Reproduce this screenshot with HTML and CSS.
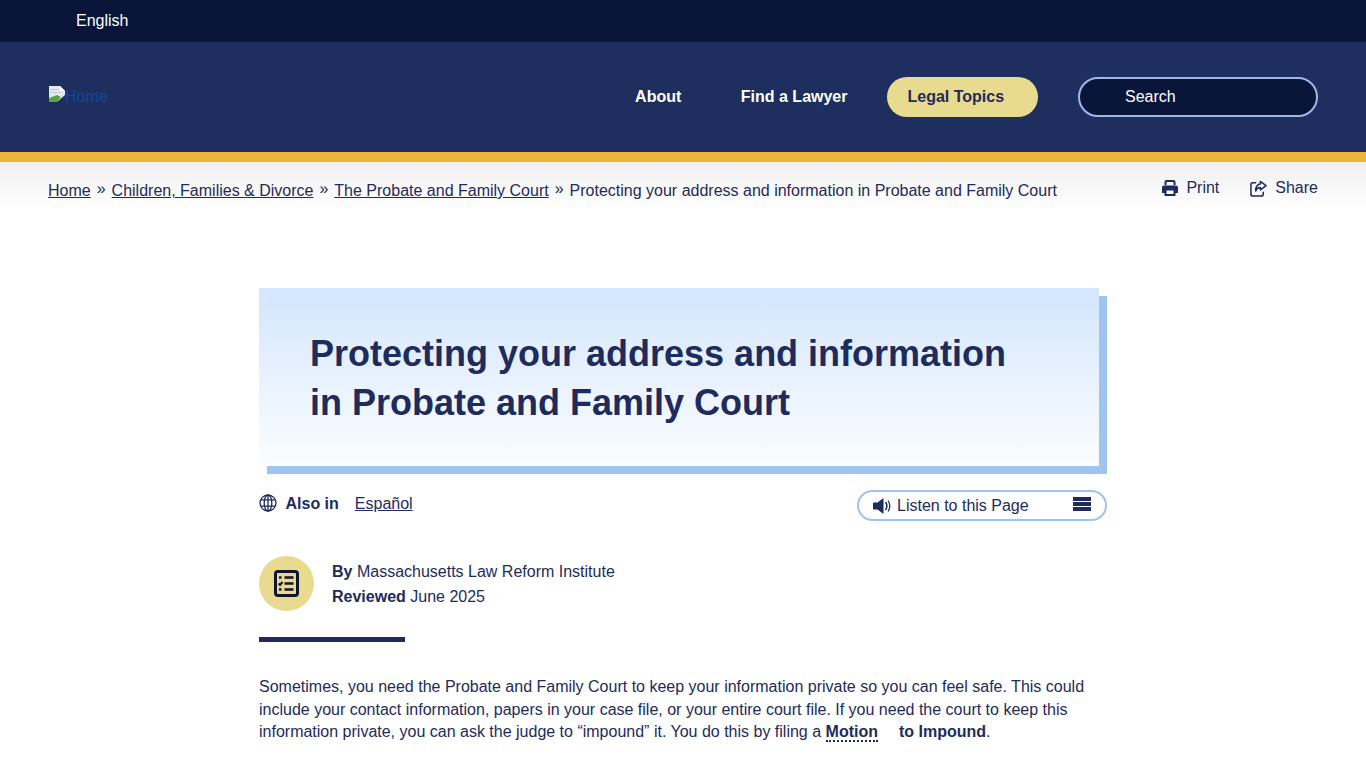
FILE: index.html
```html
<!DOCTYPE html>
<html lang="en">
<head>
<meta charset="utf-8">
<title>Protecting your address and information in Probate and Family Court</title>
<link rel="stylesheet" href="styles.css">
</head>
<body>
<div class="topbar"><span class="lang">English</span></div>
<header class="masthead">
  <a class="logo" href="#"><svg class="broken" width="16" height="16" viewBox="0 0 16 16"><path d="M0 0h11l5 5v11H0z" fill="#e6eaf0"/><path d="M11 0l5 5h-5z" fill="#fff"/><path d="M1 3h9v1H1zM1 6h12v1H1z" fill="#c4cede"/><path d="M0 16v-4l8-3 4 2-4 5z" fill="#58a63a"/><path d="M8 16l8-7v7z" fill="#1e2f5f"/></svg><span>Home</span></a>
  <nav class="nav">
    <a class="nav-link link-about" href="#">About</a>
    <a class="nav-link link-find" href="#">Find a Lawyer</a>
    <a class="nav-pill" href="#">Legal Topics</a>
    <div class="search">Search</div>
  </nav>
</header>
<div class="crumbbar">
  <div class="crumbs"><a href="#">Home</a><span class="sep">»</span><a href="#">Children, Families &amp; Divorce</a><span class="sep">»</span><a href="#">The Probate and Family Court</a><span class="sep">»</span><span>Protecting your address and information in Probate and Family Court</span></div>
  <div class="tools">
    <span class="tool tool-print"><svg width="16" height="16" viewBox="0 0 16 16"><path fill="#1e2b5c" fill-rule="evenodd" d="M4.500 0h7A2 2 0 0 1 13.500 2v3h-2V2h-7v3h-2V2a2 2 0 0 1 2-2zM2 5.500h12a2 2 0 0 1 2 2V13h-2.500v3h-11v-3H0V7.500a2 2 0 0 1 2-2zM4.500 10.500V14h7v-3.500z"/></svg>Print</span>
    <span class="tool"><svg width="17" height="17" viewBox="0 0 18 18"><path fill="none" stroke="#1e2b5c" stroke-width="1.600" d="M6.500 3H3a2 2 0 0 0-2 2v10a2 2 0 0 0 2 2h9a2 2 0 0 0 2-2v-2.500"/><path fill="none" stroke="#1e2b5c" stroke-width="1.600" stroke-linejoin="round" d="M11 1.500l6 4.500-6 4.500V8C8.500 8 7 9 6 11.500 5.800 7.500 8 4.200 11 4.200z"/></svg>Share</span>
  </div>
</div>
<main class="article">
  <div class="title-box"><h1>Protecting your address and information<br>in Probate and Family Court</h1></div>
  <div class="meta-row">
    <div class="also"><svg width="18" height="18" viewBox="0 0 18 18" fill="none" stroke="#1e2b5c" stroke-width="1.300"><circle cx="9" cy="9" r="8"/><ellipse cx="9" cy="9" rx="3.800" ry="8"/><path d="M9 1v16M1.800 5.800h14.400M1.800 12.200h14.400"/></svg><strong>Also in</strong><a href="#">Español</a></div>
    <div class="listen">
      <span class="listen-label"><svg width="18" height="16" viewBox="0 0 18 16"><path fill="#1e2b5c" d="M0 5.500Q0 4.500 1 4.500h3.500l6-4.500v16l-6-4.500H1Q0 11.500 0 10.500z"/><path fill="none" stroke="#1e2b5c" stroke-width="1.500" d="M12.500 4c1.700 2.500 1.700 5.500 0 8"/><path fill="none" stroke="#1e2b5c" stroke-width="1.200" d="M15 2.500c2.300 3.500 2.300 7.500 0 11"/></svg>Listen to this Page</span>
      <span class="burger"><i></i><i></i><i></i></span>
    </div>
  </div>
  <div class="byline">
    <div class="badge"><svg width="25" height="27" viewBox="0 0 25 27" fill="none" stroke="#0f1430"><rect x="1.500" y="1.500" width="22" height="24" rx="2.500" stroke-width="3"/><path stroke-width="2.600" d="M10.500 7.500h9M10.500 13.500h9M10.500 19.500h9"/><path stroke-width="2.600" d="M5 7.500h2.500M5 19.500h2.500"/><path stroke-width="2" d="M4.500 13.500l1.500 1.500 2.500-3"/></svg></div>
    <div class="by-text"><div><strong>By</strong> Massachusetts Law Reform Institute</div><div><strong>Reviewed</strong> June 2025</div></div>
  </div>
  <div class="rule"></div>
  <p class="intro">Sometimes, you need the Probate and Family Court to keep your information private so you can feel safe. This could include your contact information, papers in your case file, or your entire court file. If you need the court to keep this information private, you can ask the judge to “impound” it. You do this by filing a <strong class="term">Motion</strong><strong class="term-rest">to Impound</strong>.</p>
</main>
</body>
</html>
```
FILE: styles.css
```css
* { box-sizing: border-box; }
html, body { margin: 0; height: 768px; overflow: hidden; }
body { font-family: "Liberation Sans", Arial, sans-serif; color: #1e2b5c; background: #fff; font-size: 16px; }
a { color: inherit; }

.topbar { height: 42px; background: #0a153a; display: flex; align-items: center; padding-left: 76px; }
.lang { color: #fff; font-size: 16px; }

.masthead { height: 110px; background: #1e2f5f; display: flex; align-items: center; justify-content: space-between; padding: 0 48px 0 49px; }
.logo { display: flex; align-items: flex-start; color: #0a4a9c; text-decoration: none; font-size: 16px; line-height: 18px; }
.broken { display: block; margin-top: -2px; }
.nav { display: flex; align-items: center; }
.nav-link { color: #fff; font-weight: 700; text-decoration: none; font-size: 16px; }
.link-about { margin-right: 59.500px; }
.link-find { margin-right: 39.500px; }
.nav-pill { width: 151px; height: 40px; border-radius: 20px; background: #e8da8e; color: #1e2b5c; font-weight: 700; text-decoration: none; display: flex; align-items: center; padding-left: 20.500px; margin-right: 40px; }
.search { width: 240px; height: 40px; border-radius: 20px; background: #0a153a; border: 2px solid #9db9e8; color: #fff; display: flex; align-items: center; padding-left: 45px; }

.crumbbar { border-top: 10px solid #ebb536; height: 58px; background: linear-gradient(#efefef, #fff); display: flex; justify-content: space-between; padding: 19px 48px 0; }
.crumbs { display: flex; line-height: 19px; }
.sep { margin: -2px 6px 0; }
.tools { display: flex; margin-top: -3px; height: 20px; color: #1e2b5c; }
.tool { display: flex; align-items: center; gap: 8px; }
.tool-print { margin-right: 31px; }

.article { width: 848px; margin: 78px 0 0 259px; }
.title-box { width: 840px; height: 178px; background: linear-gradient(#d3e6fd, #fbfdff); box-shadow: 8px 8px 0 #a0c4f0; padding: 41px 51px 0; }
h1 { margin: 0; font-size: 36px; line-height: 49px; font-weight: 700; color: #1e2b5c; }

.meta-row { display: flex; justify-content: space-between; margin-top: 24px; height: 31px; }
.also { display: flex; align-items: flex-start; line-height: 19px; margin-top: 4px; }
.also svg { margin: 0 8.500px 0 0; }
.also a { margin-left: 16px; }
.listen { width: 250px; height: 31px; border: 2px solid #a0c4f0; border-radius: 16px; display: flex; justify-content: space-between; align-items: center; padding: 0 14px; }
.listen-label { display: flex; align-items: center; gap: 6px; }
.burger { display: flex; flex-direction: column; gap: 1px; width: 18px; margin-top: -4px; }
.burger i { display: block; height: 4px; background: #1e2b5c; }

.byline { display: flex; align-items: center; margin-top: 35px; gap: 18px; }
.badge { width: 55px; height: 55px; border-radius: 50%; background: #e8da8e; display: flex; align-items: center; justify-content: center; }
.by-text { line-height: 25px; }
.rule { width: 146px; height: 5px; background: #1e2b5c; margin-top: 26px; }
.intro { margin: 34px 0 0; width: 848px; line-height: 22.500px; font-size: 16px; }
.term { border-bottom: 2px dotted #1e2b5c; color: #1e2b5c; }
.term-rest { margin-left: 21px; }
```
